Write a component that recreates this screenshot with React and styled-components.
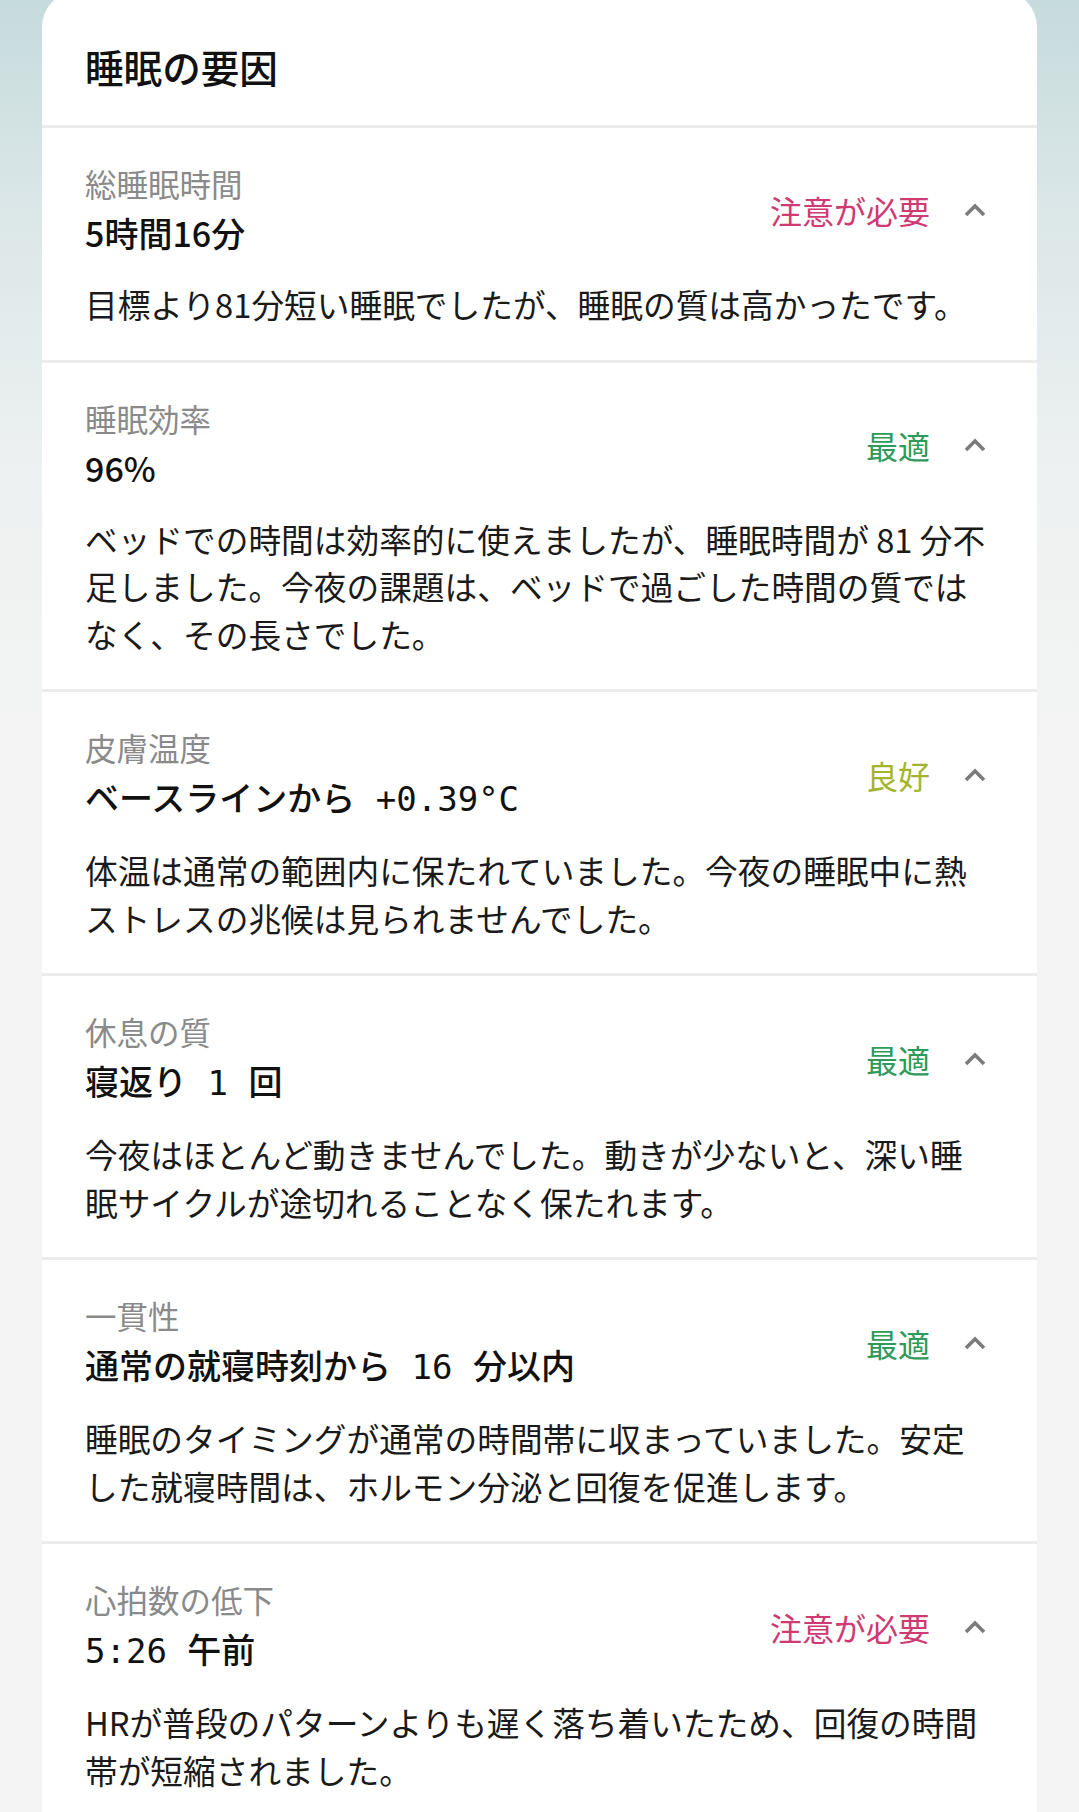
import React from "react";
import styled, { createGlobalStyle } from "styled-components";

const GlobalStyle = createGlobalStyle`
  html, body {
    margin: 0;
    padding: 0;
    height: 100%;
  }
  body {
    font-family: "Noto Sans CJK JP", "Noto Sans", sans-serif;
    background: #f4f4f4;
  }
`;

const Page = styled.div`
  height: 1812px;
  overflow: hidden;
  padding: 0 42px;
  box-sizing: border-box;
  background: linear-gradient(180deg, #c6dbdc 0px, #dce7e8 220px, #eef1f1 480px, #f4f4f4 760px, #f4f4f4 100%);
`;

const Card = styled.div`
  margin-top: -9px;
  background: #ffffff;
  border-radius: 36px 36px 0 0;
  overflow: hidden;
`;

const Title = styled.h2`
  margin: 0;
  padding: 50px 43px 34px;
  font-size: 38.6px;
  line-height: 50px;
  font-weight: 500;
  color: #111111;
`;

const Factor = styled.section`
  border-top: 3px solid #ececec;
  padding: 32px 47px 32px 43px;
`;

const Header = styled.div`
  display: flex;
  align-items: center;
  justify-content: space-between;
`;

const Names = styled.div`
  display: flex;
  flex-direction: column;
`;

const Label = styled.div`
  font-size: 31.5px;
  line-height: 46px;
  color: #8a8a8a;
`;

const Value = styled.div`
  font-size: 34px;
  line-height: 54px;
  font-weight: 500;
  color: #111111;
`;

const Num = styled.span`
  font-family: "DejaVu Sans Mono", "Liberation Mono", monospace;
  font-weight: 400;
  white-space: pre;
`;

const Status = styled.div`
  display: flex;
  align-items: center;
  gap: 30px;
`;

const StatusText = styled.span`
  font-size: 32px;
  color: ${(p) => p.$color};
`;

const Toggle = styled.span`
  display: flex;
  align-items: center;
  justify-content: center;
  width: 30px;
  height: 36px;
`;

const Body = styled.p`
  margin: 20px 0 0;
  font-size: 32.7px;
  line-height: 47.5px;
  color: #1a1a1a;
`;

const colors = {
  attention: "#cf3a72",
  optimal: "#2e9a5c",
  good: "#a2b52b",
};

const factors = [
  {
    label: "総睡眠時間",
    value: ["5時間16分"],
    status: "注意が必要",
    tone: "attention",
    text: "目標より81分短い睡眠でしたが、睡眠の質は高かったです。",
  },
  {
    label: "睡眠効率",
    value: ["96%"],
    status: "最適",
    tone: "optimal",
    text: "ベッドでの時間は効率的に使えましたが、睡眠時間が 81 分不足しました。今夜の課題は、ベッドで過ごした時間の質ではなく、その長さでした。",
  },
  {
    label: "皮膚温度",
    value: ["ベースラインから", { num: " +0.39°C" }],
    status: "良好",
    tone: "good",
    text: "体温は通常の範囲内に保たれていました。今夜の睡眠中に熱ストレスの兆候は見られませんでした。",
  },
  {
    label: "休息の質",
    value: ["寝返り", { num: " 1 " }, "回"],
    status: "最適",
    tone: "optimal",
    text: "今夜はほとんど動きませんでした。動きが少ないと、深い睡眠サイクルが途切れることなく保たれます。",
  },
  {
    label: "一貫性",
    value: ["通常の就寝時刻から", { num: " 16 " }, "分以内"],
    status: "最適",
    tone: "optimal",
    text: "睡眠のタイミングが通常の時間帯に収まっていました。安定した就寝時間は、ホルモン分泌と回復を促進します。",
  },
  {
    label: "心拍数の低下",
    value: [{ num: "5:26 " }, "午前"],
    status: "注意が必要",
    tone: "attention",
    text: "HRが普段のパターンよりも遅く落ち着いたため、回復の時間帯が短縮されました。",
  },
];

function ChevronUp() {
  return (
    <svg width="22" height="14" viewBox="0 0 22 14">
      <polyline
        points="2,12 11,3 20,12"
        fill="none"
        stroke="#7b7b7b"
        strokeWidth="3.6"
        strokeLinejoin="miter"
      />
    </svg>
  );
}

function FactorRow({ label, value, status, tone, text }) {
  return (
    <Factor>
      <Header>
        <Names>
          <Label>{label}</Label>
          <Value>
            {value.map((part, i) =>
              typeof part === "string" ? part : <Num key={i}>{part.num}</Num>
            )}
          </Value>
        </Names>
        <Status>
          <StatusText $color={colors[tone]}>{status}</StatusText>
          <Toggle>
            <ChevronUp />
          </Toggle>
        </Status>
      </Header>
      <Body>{text}</Body>
    </Factor>
  );
}

export default function App() {
  return (
    <>
      <GlobalStyle />
      <Page>
        <Card>
          <Title>睡眠の要因</Title>
          {factors.map((f) => (
            <FactorRow key={f.label} {...f} />
          ))}
        </Card>
      </Page>
    </>
  );
}
